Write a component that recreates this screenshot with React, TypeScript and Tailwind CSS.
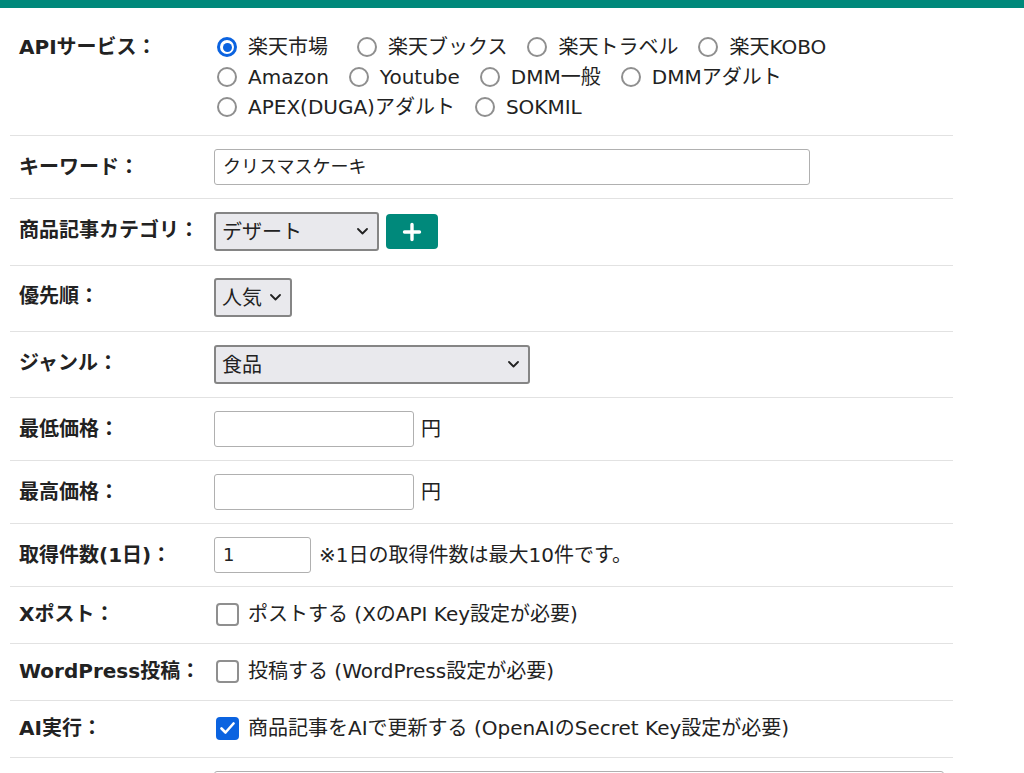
import type { ReactNode } from 'react'

const services = [
  ['楽天市場', '楽天ブックス', '楽天トラベル', '楽天KOBO'],
  ['Amazon', 'Youtube', 'DMM一般', 'DMMアダルト'],
  ['APEX(DUGA)アダルト', 'SOKMIL'],
]

function Radio({ checked }: { checked?: boolean }) {
  if (checked) {
    return (
      <span className="ml-[3px] mr-[11px] flex h-5 w-5 shrink-0 items-center justify-center rounded-full border-[3px] border-[#0b63e0]">
        <span className="h-[9px] w-[9px] rounded-full bg-[#0b63e0]" />
      </span>
    )
  }
  return <span className="ml-[3px] mr-[11px] h-5 w-5 shrink-0 rounded-full border-2 border-[#8f8f8f]" />
}

function Checkbox({ checked }: { checked?: boolean }) {
  if (checked) {
    return (
      <span className="ml-[2px] mr-[9px] flex h-[23px] w-[23px] shrink-0 items-center justify-center rounded-[4px] bg-[#0b63e0]">
        <svg width="15" height="12" viewBox="0 0 15 12" fill="none">
          <path d="M1.5 6.5l4 4 8-9" stroke="#fff" strokeWidth="2.6" strokeLinecap="round" strokeLinejoin="round" />
        </svg>
      </span>
    )
  }
  return <span className="ml-[2px] mr-[9px] h-[23px] w-[23px] shrink-0 rounded-[4px] border-2 border-[#8f8f8f]" />
}

function Select({ value, width }: { value: string; width: string }) {
  return (
    <div className={`flex h-[39px] items-center justify-between rounded-[3px] border-2 border-[#858585] bg-[#e9e9ed] pl-[6px] pr-[9px] ${width}`}>
      <span>{value}</span>
      <svg width="11" height="7" viewBox="0 0 11 7" fill="none">
        <path d="M1 1l4.5 4.5L10 1" stroke="#222" strokeWidth="1.8" strokeLinecap="round" strokeLinejoin="round" />
      </svg>
    </div>
  )
}

function Row({ label, children, pad, lpad = 'pt-[3px]' }: { label: string; children: ReactNode; pad: string; lpad?: string }) {
  return (
    <div className={`flex items-start border-b border-[#e2e2e2] ${pad}`}>
      <div className={`w-[204px] shrink-0 pl-[9px] font-bold ${lpad}`}>{label}</div>
      <div className="flex flex-1 items-center pr-[9px]">{children}</div>
    </div>
  )
}

export default function App() {
  return (
    <div className="min-h-screen bg-white font-['DejaVu_Sans','Noto_Sans_CJK_JP',sans-serif] text-[20px] leading-[30px] text-[#222]">
      <div className="h-2 bg-[#00897b]" />
      <div className="ml-[10px] w-[943px] pt-3">
        {/* APIサービス */}
        <div className="flex items-start border-b border-[#e2e2e2] pb-[13px] pt-3">
          <div className="w-[204px] shrink-0 pl-[9px] font-bold">APIサービス：</div>
          <div className="flex flex-col">
            {services.map((line, i) => (
              <div key={i} className="flex h-[30px] items-center">
                {line.map((s, j) => (
                  <label key={s} className={i === 0 && j === 0 ? 'mr-[26px] flex items-center' : 'mr-[17px] flex items-center'}>
                    <Radio checked={i === 0 && j === 0} />
                    <span>{s}</span>
                  </label>
                ))}
              </div>
            ))}
          </div>
        </div>

        <Row label="キーワード：" pad="pt-[13px] pb-[13px]">
          <div className="flex h-[36px] w-[596px] items-center rounded-[3px] border border-[#b0b0b0] px-2 text-[18px]">クリスマスケーキ</div>
        </Row>

        <Row label="商品記事カテゴリ：" pad="pt-[13px] pb-[14px]">
          <Select value="デザート" width="w-[165px]" />
          <button className="ml-[7px] flex h-[35px] w-[52px] items-center justify-center rounded-[4px] bg-[#00897b]">
            <svg width="20" height="20" viewBox="0 0 20 20" fill="none">
              <path d="M10 2.5v15M2.5 10h15" stroke="#fff" strokeWidth="3.4" strokeLinecap="round" />
            </svg>
          </button>
        </Row>

        <Row label="優先順：" pad="pt-3 pb-[14px]">
          <Select value="人気" width="w-[78px]" />
        </Row>

        <Row label="ジャンル：" pad="pt-[13px] pb-[13px]">
          <Select value="食品" width="w-[316px]" />
        </Row>

        <Row label="最低価格：" pad="pt-[13px] pb-[13px]">
          <div className="h-[36px] w-[200px] rounded-[3px] border border-[#b0b0b0]" />
          <span className="ml-[7px]">円</span>
        </Row>

        <Row label="最高価格：" pad="pt-[13px] pb-[13px]">
          <div className="h-[36px] w-[200px] rounded-[3px] border border-[#b0b0b0]" />
          <span className="ml-[7px]">円</span>
        </Row>

        <Row label="取得件数(1日)：" pad="pt-[13px] pb-[13px]">
          <div className="flex h-[36px] w-[97px] items-center rounded-[3px] border border-[#b0b0b0] px-2 text-[18px]">1</div>
          <span className="ml-2">※1日の取得件数は最大10件です。</span>
        </Row>

        <Row label="Xポスト：" pad="pt-3 pb-[14px]" lpad="pt-0">
          <Checkbox />
          <span>ポストする (XのAPI Key設定が必要)</span>
        </Row>

        <Row label="WordPress投稿：" pad="pt-3 pb-[14px]" lpad="pt-0">
          <Checkbox />
          <span>投稿する (WordPress設定が必要)</span>
        </Row>

        <Row label="AI実行：" pad="pt-3 pb-[14px]" lpad="pt-0">
          <Checkbox checked />
          <span>商品記事をAIで更新する (OpenAIのSecret Key設定が必要)</span>
        </Row>

        <div className="flex items-start pt-[13px]">
          <div className="w-[204px] shrink-0" />
          <div className="flex-1 pr-[9px]">
            <div className="h-[120px] rounded-[3px] border border-[#b0b0b0]" />
          </div>
        </div>
      </div>
    </div>
  )
}
